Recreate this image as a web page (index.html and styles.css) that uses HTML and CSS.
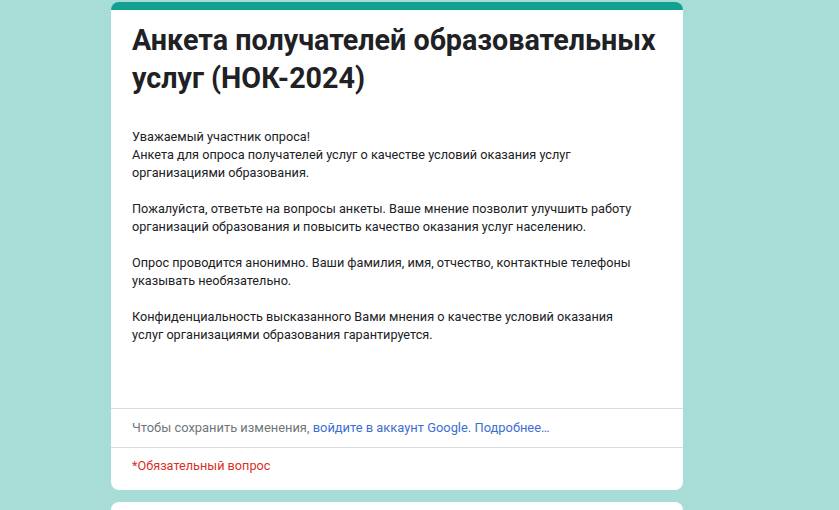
FILE: index.html
```html
<!DOCTYPE html>
<html lang="ru">
<head>
<meta charset="utf-8">
<title>Анкета получателей образовательных услуг (НОК-2024)</title>
<link rel="stylesheet" href="styles.css">
</head>
<body>
<div class="page">
  <div class="card header-card">
    <div class="head">
      <h1 class="title">Анкета получателей образовательных услуг (НОК-2024)</h1>
      <div class="desc">Уважаемый участник опроса!<br>Анкета для опроса получателей услуг о качестве условий оказания услуг организациями образования.<br><br>Пожалуйста, ответьте на вопросы анкеты. Ваше мнение позволит улучшить работу организаций образования и повысить качество оказания услуг населению.<br><br>Опрос проводится анонимно. Ваши фамилия, имя, отчество, контактные телефоны указывать необязательно.<br><br>Конфиденциальность высказанного Вами мнения о качестве условий оказания услуг организациями образования гарантируется.</div>
    </div>
    <div class="signin">Чтобы сохранить изменения, <a class="link" href="#">войдите в аккаунт Google.</a> <a class="link" href="#">Подробнее…</a></div>
    <div class="required">*Обязательный вопрос</div>
  </div>
  <div class="card next-card"></div>
</div>
</body>
</html>
```

FILE: styles.css
```css
html, body {
  margin: 0;
  padding: 0;
}
body {
  background: #a8dcd6;
  font-family: Roboto, "Liberation Sans", Arial, sans-serif;
  color: #202124;
  height: 510px;
  overflow: hidden;
}
.page {
  width: 572px;
  padding: 2px 0 0 111px;
  display: flex;
  flex-direction: column;
  gap: 12px;
}
.card {
  background: #fff;
  border-radius: 8px;
}
.header-card {
  border-top: 8px solid #12a190;
}
.head {
  padding: 11px 40px 64px 21px;
  border-bottom: 1px solid #dadce0;
}
.title {
  margin: 0;
  margin-right: -20px;
  font-size: 28.7px;
  line-height: 38px;
  font-weight: 700;
  color: #202124;
}
.desc {
  margin-top: 31px;
  font-size: 12.7px;
  line-height: 18px;
  color: #202124;
}
.signin {
  padding: 9px 21px 10px;
  font-size: 12.9px;
  line-height: 19px;
  color: #70757a;
  border-bottom: 1px solid #dadce0;
}
.link {
  color: #3c6fd1;
  text-decoration: none;
}
.required {
  padding: 9px 21px 15px;
  font-size: 12.7px;
  line-height: 18px;
  color: #d93025;
}
.next-card {
  height: 40px;
}
```
